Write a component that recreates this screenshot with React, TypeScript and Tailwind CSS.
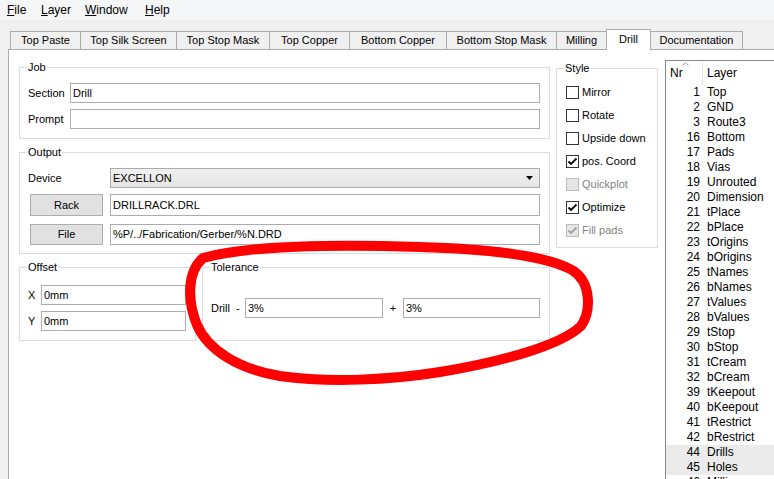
import React from 'react';

const layers: [number, string][] = [
	[1, 'Top'],
	[2, 'GND'],
	[3, 'Route3'],
	[16, 'Bottom'],
	[17, 'Pads'],
	[18, 'Vias'],
	[19, 'Unrouted'],
	[20, 'Dimension'],
	[21, 'tPlace'],
	[22, 'bPlace'],
	[23, 'tOrigins'],
	[24, 'bOrigins'],
	[25, 'tNames'],
	[26, 'bNames'],
	[27, 'tValues'],
	[28, 'bValues'],
	[29, 'tStop'],
	[30, 'bStop'],
	[31, 'tCream'],
	[32, 'bCream'],
	[39, 'tKeepout'],
	[40, 'bKeepout'],
	[41, 'tRestrict'],
	[42, 'bRestrict'],
	[44, 'Drills'],
	[45, 'Holes'],
	[46, 'Milling'],
];

const tabs = [
	{ label: 'Top Paste', w: 'w-[71px]' },
	{ label: 'Top Silk Screen', w: 'w-[97px]' },
	{ label: 'Top Stop Mask', w: 'w-[94px]' },
	{ label: 'Top Copper', w: 'w-[81px]' },
	{ label: 'Bottom Copper', w: 'w-[98px]' },
	{ label: 'Bottom Stop Mask', w: 'w-[111px]' },
	{ label: 'Milling', w: 'w-[51px]' },
	{ label: 'Drill', w: 'w-[45px]', active: true },
	{ label: 'Documentation', w: 'w-[93px]' },
];

const styleOpts = [
	{ label: 'Mirror', checked: false, disabled: false },
	{ label: 'Rotate', checked: false, disabled: false },
	{ label: 'Upside down', checked: false, disabled: false },
	{ label: 'pos. Coord', checked: true, disabled: false },
	{ label: 'Quickplot', checked: false, disabled: true },
	{ label: 'Optimize', checked: true, disabled: false },
	{ label: 'Fill pads', checked: true, disabled: true },
];

function Group({ title, className, children }: { title: string; className?: string; children: React.ReactNode }) {
	return (
		<div className={`border border-[#dcdcdc] ${className ?? ''}`}>
			<div className="-mt-[8px] ml-[7px] w-fit bg-white px-[1px] leading-[14px]">{title}</div>
			{children}
		</div>
	);
}

function Field({ value, className }: { value?: string; className?: string }) {
	return (
		<div className={`flex items-center border border-[#abadb3] bg-white pl-[2px] ${className ?? ''}`}>
			{value}
		</div>
	);
}

function Button({ label, h }: { label: string; h: string }) {
	return (
		<div className={`flex ${h} w-[73px] items-center justify-center border border-[#adadad] bg-[#e1e1e1]`}>
			{label}
		</div>
	);
}

function CheckBox({ label, checked, disabled }: { label: string; checked: boolean; disabled: boolean }) {
	return (
		<div className="flex h-[23px] items-center pl-[9px]">
			<div
				className={`flex h-[13px] w-[13px] items-center justify-center border ${
					disabled ? 'border-[#bcbcbc] bg-[#e6e6e6]' : 'border-[#333333] bg-white'
				}`}
			>
				{checked && (
					<svg width="11" height="11" viewBox="0 0 11 11">
						<path
							d="M1.5 5.5 L4 8 L9.5 2.5"
							fill="none"
							stroke={disabled ? '#a0a0a0' : '#000000'}
							strokeWidth="1.8"
						/>
					</svg>
				)}
			</div>
			<span className={`ml-[3px] ${disabled ? 'text-[#838383]' : 'text-black'}`}>{label}</span>
		</div>
	);
}

export default function App() {
	return (
		<div className="relative h-[479px] w-[774px] overflow-hidden bg-[#f0f0f0] font-['Liberation_Sans',Arial,sans-serif] text-black">
			{/* menu bar */}
			<div className="flex h-[20px] items-center bg-[#f5f6f7] pl-[7px] text-[12px]">
				<span className="w-[34px]">
					<span className="underline">F</span>ile
				</span>
				<span className="w-[44px]">
					<span className="underline">L</span>ayer
				</span>
				<span className="w-[60px]">
					<span className="underline">W</span>indow
				</span>
				<span>
					<span className="underline">H</span>elp
				</span>
			</div>

			<div className="ml-[8px] mt-[9px] text-[11px]">
				{/* tabs */}
				<div className="flex h-[20px] items-end pl-[2px]">
					{tabs.map((t, i) => (
						<div
							key={t.label}
							className={`${t.w} ${i > 0 ? '-ml-px' : ''} flex items-center justify-center border border-b-0 border-[#acacac] ${
								t.active ? 'relative z-10 -mb-px h-[21px] bg-white pb-[2px]' : 'h-[18px] bg-[#f0f0f0]'
							}`}
						>
							{t.label}
						</div>
					))}
				</div>

				{/* page */}
				<div className="flex h-[440px] w-[780px] border-l border-t border-[#acacac] bg-white">
					<div className="w-[541px] pl-[10px] pt-[17px]">
						<Group title="Job" className="pb-[9px]">
							<div className="mt-[9px] flex items-center pl-[8px] pr-[9px]">
								<span className="w-[42px] pt-px">Section</span>
								<Field value="Drill" className="h-[20px] flex-1" />
							</div>
							<div className="mt-[6px] flex items-center pl-[8px] pr-[9px]">
								<span className="w-[42px] pt-px">Prompt</span>
								<Field className="h-[20px] flex-1" />
							</div>
						</Group>

						<Group title="Output" className="mt-[13px] pb-[8px]">
							<div className="mt-[9px] flex items-center pl-[8px] pr-[9px]">
								<span className="w-[82px] pt-px">Device</span>
								<div className="flex h-[20px] flex-1 items-center justify-between border border-[#acacac] bg-gradient-to-b from-[#f0f0f0] to-[#e5e5e5] pl-[2px] pr-[6px]">
									<span>EXCELLON</span>
									<svg width="7" height="4" viewBox="0 0 7 4">
										<polygon points="0,0 7,0 3.5,4" fill="#000" />
									</svg>
								</div>
							</div>
							<div className="mt-[6px] flex items-center pl-[10px] pr-[9px]">
								<Button label="Rack" h="h-[22px]" />
								<Field value="DRILLRACK.DRL" className="ml-[7px] h-[22px] flex-1" />
							</div>
							<div className="mt-[8px] flex items-center pl-[10px] pr-[9px]">
								<Button label="File" h="h-[21px]" />
								<Field value="%P/../Fabrication/Gerber/%N.DRD" className="ml-[7px] h-[21px] flex-1" />
							</div>
						</Group>

						<div className="mt-[13px] flex gap-[6px]">
							<Group title="Offset" className="w-[177px] pb-[9px]">
								<div className="mt-[11px] flex items-center pl-[8px] pr-[9px]">
									<span className="w-[13px] pt-px">X</span>
									<Field value="0mm" className="h-[20px] flex-1" />
								</div>
								<div className="mt-[6px] flex items-center pl-[8px] pr-[9px]">
									<span className="w-[13px] pt-px">Y</span>
									<Field value="0mm" className="h-[20px] flex-1" />
								</div>
							</Group>
							<Group title="Tolerance" className="w-[348px]">
								<div className="mt-[24px] flex items-center pl-[8px]">
									<span className="w-[25px] pt-px">Drill</span>
									<span className="w-[9px]">-</span>
									<Field value="3%" className="h-[20px] w-[138px]" />
									<span className="w-[20px] text-center">+</span>
									<Field value="3%" className="h-[20px] w-[137px]" />
								</div>
							</Group>
						</div>
					</div>

					<Group title="Style" className="ml-[6px] mt-[18px] h-fit w-[102px] pb-[5px]">
						<div className="mt-[6px]">
							{styleOpts.map((o) => (
								<CheckBox key={o.label} {...o} />
							))}
						</div>
					</Group>

					{/* layer list */}
					<div className="ml-[7px] mt-[10px] w-[120px] border-l border-t border-[#828790] bg-white text-[12px]">
						<div className="flex h-[24px] items-center">
							<div className="relative flex h-full w-[37px] items-center border-r border-[#e5e5e5] pl-[4px]">
								Nr
								<svg className="absolute left-[16px] top-[1px]" width="7" height="4" viewBox="0 0 7 4">
									<path d="M0.5 3.5 L3.5 0.5 L6.5 3.5" fill="none" stroke="#97a5c0" strokeWidth="1" />
								</svg>
							</div>
							<div className="pl-[4px]">Layer</div>
						</div>
						{layers.map(([nr, name]) => (
							<div
								key={nr}
								className={`flex h-[15px] leading-[15px] ${nr === 44 || nr === 45 ? 'bg-[#ebebeb]' : ''}`}
							>
								<span className="w-[37px] pr-[3px] text-right">{nr}</span>
								<span className="pl-[4px]">{name}</span>
							</div>
						))}
					</div>
				</div>
			</div>

			{/* red hand-drawn annotation */}
			<svg className="pointer-events-none absolute left-0 top-0" width="774" height="479" viewBox="0 0 774 479">
				<path
					d="M203 258 C250 245 330 244 420 247 C490 249 545 255 572 270 C592 282 591 312 581 326 C560 346 500 362 440 372 C390 380 330 383 280 376 C238 369 208 350 197 325 C187 300 187 272 203 258 Z"
					fill="none"
					stroke="#ff0000"
					strokeWidth="10"
					strokeLinecap="round"
					strokeLinejoin="round"
				/>
			</svg>
		</div>
	);
}
